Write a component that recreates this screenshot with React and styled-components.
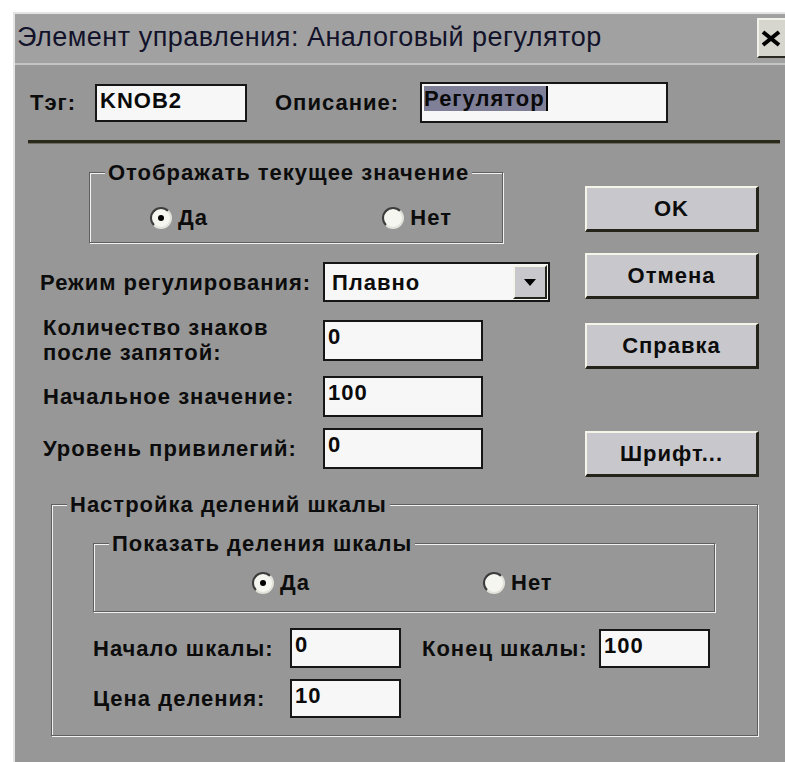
import React from 'react';
import styled, { createGlobalStyle } from 'styled-components';

const GlobalStyle = createGlobalStyle`
  html, body {
    margin: 0;
    padding: 0;
    background: #ffffff;
    overflow: hidden;
  }
  body {
    font-family: "Liberation Sans", Arial, sans-serif;
  }
`;

const Window = styled.div`
  box-sizing: border-box;
  margin: 12px 0 0 13px;
  width: 790px;
  height: 770px;
  border-top: 2px solid #e4e4e4;
  border-left: 2px solid #e4e4e4;
  background: #979797;
  display: flex;
  flex-direction: column;
`;

const TitleBar = styled.div`
  height: 49px;
  flex-shrink: 0;
  background: #a1a1a1;
  border-bottom: 2px solid #c4c4c4;
  display: flex;
  align-items: flex-start;
  padding-left: 2px;
`;

const Title = styled.span`
  margin-top: 8px;
  font-family: "Liberation Sans", Arial, sans-serif;
  font-size: 27px;
  line-height: 31px;
  letter-spacing: 0.5px;
  color: #12122a;
  white-space: nowrap;
`;

const CloseButton = styled.div`
  box-sizing: border-box;
  margin: 4px 0 0 auto;
  width: 46px;
  height: 40px;
  background: #d6d6ce;
  border-top: 2px solid #f2f2ea;
  border-left: 2px solid #f2f2ea;
  border-bottom: 2px solid #2a2a22;
  display: flex;
  align-items: center;
  padding-left: 1px;
`;

const Text = styled.span`
  font-family: "Liberation Sans", Arial, sans-serif;
  font-weight: bold;
  font-size: 22px;
  line-height: 25px;
  letter-spacing: 1px;
  color: #0c0c0c;
  white-space: nowrap;
`;

const Label = styled(Text)`
  box-sizing: border-box;
  display: block;
  width: ${(p) => p.$w}px;
  padding-left: ${(p) => p.$indent || 0}px;
  margin-left: ${(p) => p.$gap || 0}px;
  white-space: ${(p) => (p.$wrap ? 'normal' : 'nowrap')};
`;

const Field = styled.div`
  box-sizing: border-box;
  width: ${(p) => p.$w}px;
  height: ${(p) => p.$h || 40}px;
  background: #f7f7f7;
  border: 2px solid #161616;
  padding: 2px 0 0 3px;
  font-family: "Liberation Sans", Arial, sans-serif;
  font-weight: bold;
  font-size: 22px;
  line-height: 25px;
  letter-spacing: 1px;
  color: #0a0a0a;
  white-space: nowrap;
`;

const Selected = styled.span`
  display: inline-block;
  background: #7f7f98;
  border-right: 2px solid #000;
  padding-right: 1px;
  margin-left: -1px;
`;

const TagRow = styled.div`
  display: flex;
  align-items: center;
  margin-top: 17px;
  padding-left: 15px;
`;

const Separator = styled.div`
  margin: 17px 0 0 13px;
  width: 752px;
  height: 3px;
  background: #2b2919;
  border-bottom: 1px solid #6d6c62;
`;

const Main = styled.div`
  display: grid;
  grid-template-columns: 570px 174px;
`;

const LeftColumn = styled.div`
  display: flex;
  flex-direction: column;
`;

const RightColumn = styled.div`
  display: flex;
  flex-direction: column;
`;

const Group = styled.div`
  position: relative;
  box-sizing: border-box;
  flex-shrink: 0;
  width: ${(p) => p.$w}px;
  height: ${(p) => p.$h}px;
  margin: ${(p) => p.$top}px 0 0 ${(p) => p.$left}px;
  border: 1px solid #5f5f5f;
  box-shadow: inset 1px 1px 0 #f2f2f2, 1px 1px 0 #f2f2f2;
`;

const Caption = styled(Text)`
  position: absolute;
  left: 15px;
  top: -13px;
  padding: 0 3px;
  background: #979797;
`;

const RadioRow = styled.div`
  display: flex;
  margin: ${(p) => p.$top}px 0 0 ${(p) => p.$left}px;
`;

const RadioOption = styled.div`
  display: flex;
  align-items: center;
  gap: 6px;
  width: ${(p) => p.$w}px;
`;

const RadioCircle = styled.span`
  box-sizing: border-box;
  width: 22px;
  height: 22px;
  border-radius: 50%;
  background: #f6f6f0;
  border: 2px solid;
  border-color: #3c3c3c #e2e2da #e2e2da #3c3c3c;
  display: flex;
  align-items: center;
  justify-content: center;

  &::after {
    content: '';
    width: 6px;
    height: 6px;
    border-radius: 50%;
    background: ${(p) => (p.$checked ? '#000' : 'transparent')};
  }
`;

const FormRow = styled.div`
  display: flex;
  align-items: center;
  margin-top: ${(p) => p.$top}px;
`;

const Combo = styled.div`
  box-sizing: border-box;
  width: 227px;
  height: 40px;
  background: #f7f7f7;
  border: 2px solid #161616;
  display: flex;
  align-items: center;
  justify-content: space-between;
  padding: 0 1px 0 7px;
`;

const ComboButton = styled.div`
  box-sizing: border-box;
  width: 34px;
  height: 34px;
  background: #c8c8cc;
  border-top: 2px solid #f4f4e8;
  border-left: 2px solid #f4f4e8;
  border-right: 2px solid #24241a;
  border-bottom: 2px solid #24241a;
  display: flex;
  align-items: center;
  justify-content: center;
`;

const Button = styled.div`
  box-sizing: border-box;
  width: 174px;
  height: 46px;
  margin-top: ${(p) => p.$top}px;
  background: #c8c8cc;
  border-top: 2px solid #f4f4e8;
  border-left: 2px solid #f4f4e8;
  border-right: 3px solid #24241a;
  border-bottom: 3px solid #24241a;
  display: flex;
  align-items: center;
  justify-content: center;
`;

const ScaleRow = styled.div`
  display: flex;
  align-items: center;
  margin-top: ${(p) => p.$top}px;
`;

const Radio = ({ label, checked, width }) => (
  <RadioOption $w={width}>
    <RadioCircle $checked={checked} />
    <Text>{label}</Text>
  </RadioOption>
);

const App = () => (
  <>
    <GlobalStyle />
    <Window>
      <TitleBar>
        <Title>Элемент управления: Аналоговый регулятор</Title>
        <CloseButton>
          <svg width="22" height="17" viewBox="0 0 22 17">
            <path d="M3 2 L19 15 M19 2 L3 15" stroke="#000" strokeWidth="4" />
          </svg>
        </CloseButton>
      </TitleBar>

      <TagRow>
        <Label $w={65}>Тэг:</Label>
        <Field $w={152} $h={38}>KNOB2</Field>
        <Label $w={145} $gap={28}>Описание:</Label>
        <Field $w={248} $h={41}>
          <Selected>Регулятор</Selected>
        </Field>
      </TagRow>

      <Separator />

      <Main>
        <LeftColumn>
          <Group $w={414} $h={71} $top={28} $left={74}>
            <Caption>Отображать текущее значение</Caption>
            <RadioRow $top={32} $left={60}>
              <Radio label="Да" checked width={233} />
              <Radio label="Нет" width={120} />
            </RadioRow>
          </Group>

          <FormRow $top={19}>
            <Label $w={308} $indent={25}>Режим регулирования:</Label>
            <Combo>
              <Text>Плавно</Text>
              <ComboButton>
                <svg width="12" height="7" viewBox="0 0 12 7">
                  <path d="M0 0 H12 L6 7 Z" fill="#000" />
                </svg>
              </ComboButton>
            </Combo>
          </FormRow>

          <FormRow $top={13}>
            <Label $w={308} $indent={28} $wrap>
              Количество знаков<br />после запятой:
            </Label>
            <Field $w={160} $h={41}>0</Field>
          </FormRow>

          <FormRow $top={11}>
            <Label $w={308} $indent={28}>Начальное значение:</Label>
            <Field $w={160} $h={41}>100</Field>
          </FormRow>

          <FormRow $top={11}>
            <Label $w={308} $indent={28}>Уровень привилегий:</Label>
            <Field $w={160} $h={41}>0</Field>
          </FormRow>
        </LeftColumn>

        <RightColumn>
          <Button $top={42}><Text>OK</Text></Button>
          <Button $top={21}><Text>Отмена</Text></Button>
          <Button $top={24}><Text>Справка</Text></Button>
          <Button $top={62}><Text>Шрифт...</Text></Button>
        </RightColumn>
      </Main>

      <Group $w={707} $h={232} $top={27} $left={36}>
        <Caption>Настройка делений шкалы</Caption>

        <Group $w={622} $h={69} $top={38} $left={41}>
          <Caption>Показать деления шкалы</Caption>
          <RadioRow $top={26} $left={158}>
            <Radio label="Да" checked width={231} />
            <Radio label="Нет" width={120} />
          </RadioRow>
        </Group>

        <ScaleRow $top={16}>
          <Label $w={238} $indent={41}>Начало шкалы:</Label>
          <Field $w={111}>0</Field>
          <Label $w={177} $gap={21}>Конец шкалы:</Label>
          <Field $w={111} $h={39}>100</Field>
        </ScaleRow>

        <ScaleRow $top={11}>
          <Label $w={238} $indent={41}>Цена деления:</Label>
          <Field $w={111} $h={39}>10</Field>
        </ScaleRow>
      </Group>
    </Window>
  </>
);

export default App;
